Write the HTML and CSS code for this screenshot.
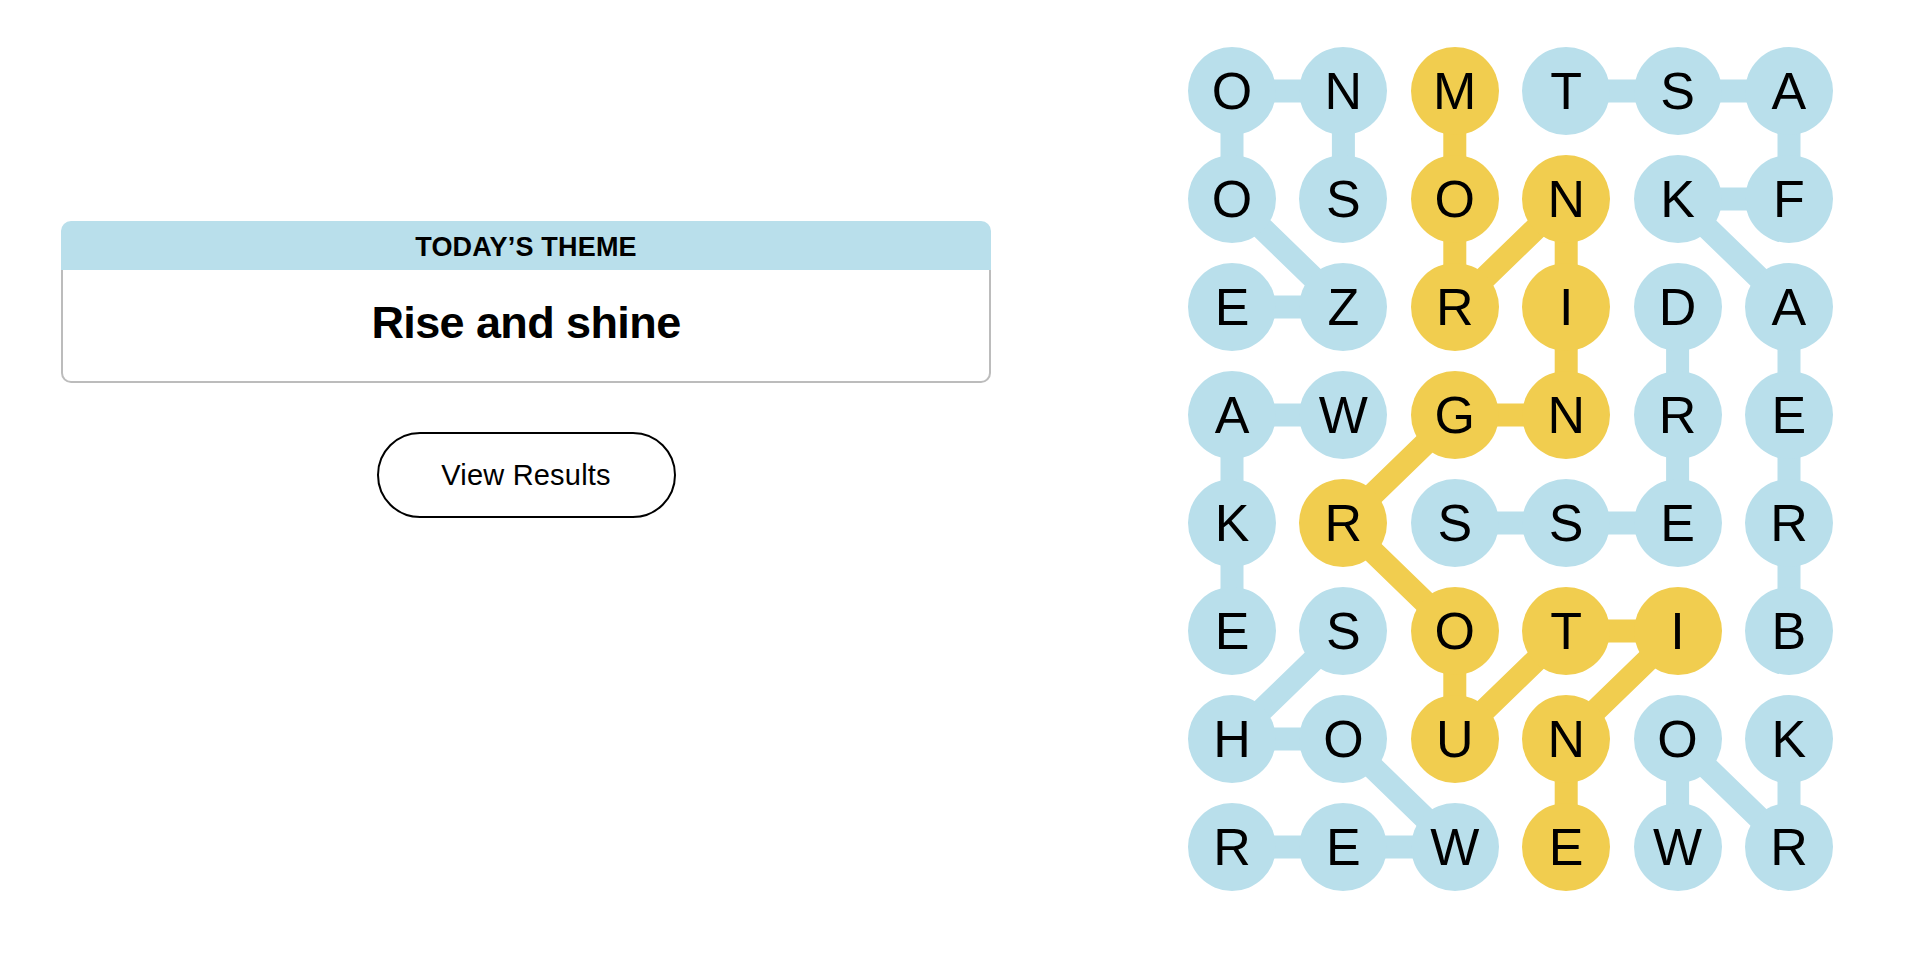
FILE: index.html
```html
<!DOCTYPE html>
<html lang="en">
<head>
    <meta charset="UTF-8">
    <meta name="viewport" content="width=device-width, initial-scale=1.0">
    <title>Strands - Rise and shine</title>
    <link rel="stylesheet" href="styles.css">
</head>
<body>
    <main class="game">
        <section class="sidebar">
            <div class="theme-card">
                <h2 class="theme-label">TODAY’S THEME</h2>
                <div class="theme-body">
                    <p class="theme-name">Rise and shine</p>
                </div>
            </div>
            <button class="results-btn">View Results</button>
        </section>

        <section class="board">
            <!-- word paths sit behind the letters -->
            <svg class="paths" width="645" height="844" viewBox="0 0 645 844">
                <g class="path-blue">
                    <polyline points="155.4,152 155.4,44 44,44 44,152 155.4,260 44,260"/>
                    <polyline points="601,584 601,476 601,368 601,260 489.6,152 601,152 601,44 489.6,44 378.2,44"/>
                    <polyline points="489.6,260 489.6,368 489.6,476 378.2,476 266.8,476"/>
                    <polyline points="155.4,368 44,368 44,476 44,584"/>
                    <polyline points="155.4,584 44,692 155.4,692 266.8,800 155.4,800 44,800"/>
                    <polyline points="489.6,800 489.6,692 601,800 601,692"/>
                </g>
                <g class="path-gold">
                    <polyline points="266.8,44 266.8,152 266.8,260 378.2,152 378.2,260 378.2,368 266.8,368 155.4,476 266.8,584 266.8,692 378.2,584 489.6,584 378.2,692 378.2,800"/>
                </g>
            </svg>
            <div class="grid">
                <span class="cell">O</span>
                <span class="cell">N</span>
                <span class="cell spangram">M</span>
                <span class="cell">T</span>
                <span class="cell">S</span>
                <span class="cell">A</span>

                <span class="cell">O</span>
                <span class="cell">S</span>
                <span class="cell spangram">O</span>
                <span class="cell spangram">N</span>
                <span class="cell">K</span>
                <span class="cell">F</span>

                <span class="cell">E</span>
                <span class="cell">Z</span>
                <span class="cell spangram">R</span>
                <span class="cell spangram">I</span>
                <span class="cell">D</span>
                <span class="cell">A</span>

                <span class="cell">A</span>
                <span class="cell">W</span>
                <span class="cell spangram">G</span>
                <span class="cell spangram">N</span>
                <span class="cell">R</span>
                <span class="cell">E</span>

                <span class="cell">K</span>
                <span class="cell spangram">R</span>
                <span class="cell">S</span>
                <span class="cell">S</span>
                <span class="cell">E</span>
                <span class="cell">R</span>

                <span class="cell">E</span>
                <span class="cell">S</span>
                <span class="cell spangram">O</span>
                <span class="cell spangram">T</span>
                <span class="cell spangram">I</span>
                <span class="cell">B</span>

                <span class="cell">H</span>
                <span class="cell">O</span>
                <span class="cell spangram">U</span>
                <span class="cell spangram">N</span>
                <span class="cell">O</span>
                <span class="cell">K</span>

                <span class="cell">R</span>
                <span class="cell">E</span>
                <span class="cell">W</span>
                <span class="cell spangram">E</span>
                <span class="cell">W</span>
                <span class="cell">R</span>
            </div>
        </section>
    </main>
</body>
</html>
```

FILE: styles.css
```css
body {
    font-family: 'Liberation Sans', Arial, sans-serif;
    background-color: #ffffff;
    color: #000000;
    margin: 0;
    padding: 0;
}
.game {
    display: flex;
    justify-content: space-between;
    align-items: flex-start;
    padding: 47px 91px 0 61px;
}
.sidebar {
    width: 930px;
    padding-top: 174px;
}
.theme-label {
    margin: 0;
    height: 49px;
    padding-top: 3px;
    box-sizing: border-box;
    line-height: 46px;
    background-color: #b9dfeb;
    border-radius: 10px 10px 0 0;
    text-align: center;
    font-size: 27px;
    font-weight: bold;
    letter-spacing: 0.2px;
}
.theme-body {
    border: 2px solid #bcbcbc;
    border-top: none;
    border-radius: 0 0 10px 10px;
    padding: 30px 0 36px;
    text-align: center;
}
.theme-name {
    margin: 0;
    font-size: 45px;
    line-height: 45px;
    font-weight: bold;
    letter-spacing: -0.6px;
}
.results-btn {
    display: block;
    margin: 49px auto 0;
    width: 299px;
    height: 86px;
    background-color: #ffffff;
    border: 2px solid #000000;
    border-radius: 44px;
    font-family: inherit;
    font-size: 29px;
    letter-spacing: 0.2px;
    color: #000000;
    cursor: pointer;
}
.board {
    position: relative;
    width: 645px;
    height: 844px;
}
.paths {
    position: absolute;
    top: 0;
    left: 0;
}
.paths polyline {
    fill: none;
    stroke-width: 23;
    stroke-linejoin: round;
}
.path-blue polyline {
    stroke: #b9dfeb;
}
.path-gold polyline {
    stroke: #f1cd4f;
}
.grid {
    position: relative;
    display: grid;
    grid-template-columns: repeat(6, 88px);
    grid-auto-rows: 88px;
    column-gap: 23.4px;
    row-gap: 20px;
}
.cell {
    display: flex;
    align-items: center;
    justify-content: center;
    border-radius: 50%;
    background-color: #b9dfeb;
    font-size: 52px;
    line-height: 1;
}
.cell.spangram {
    background-color: #f1cd4f;
}
```
